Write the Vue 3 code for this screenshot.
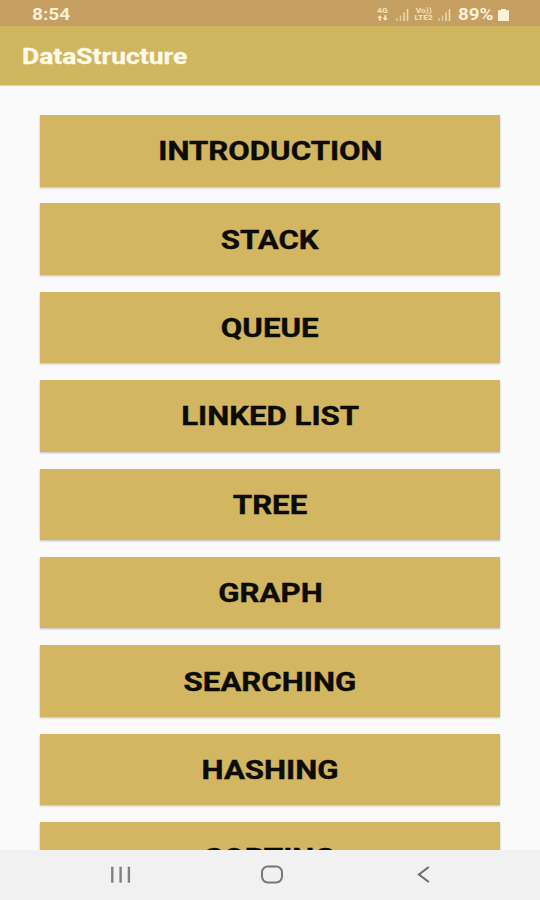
<script setup>
import { ref } from 'vue';

const appTitle = ref('DataStructure');

const topics = ref([
    'Introduction',
    'Stack',
    'Queue',
    'Linked List',
    'Tree',
    'Graph',
    'Searching',
    'Hashing',
    'Sorting',
]);
</script>

<template>
    <div class="screen">
        <div class="status-bar">
            <span class="clock">8:54</span>
            <div class="status-icons">
                <div class="network-type">
                    <span>4G</span>
                    <svg width="11" height="6" viewBox="0 0 10 5">
                        <path d="M2.5 0L4.8 2.5H3.3V5H1.7V2.5H0.2ZM7.5 5L5.2 2.5H6.7V0H8.3V2.5H9.8Z" fill="#f8ebcd" />
                    </svg>
                </div>
                <svg class="signal" width="13" height="13" viewBox="0 0 13 13">
                    <path d="M1 10V13M4.5 7.5V13" stroke="#f3e2bf" stroke-width="1.4" opacity="0.7" />
                    <path d="M8 4.5V13M11.5 1V13" stroke="#f3e2bf" stroke-width="1.6" opacity="0.85" />
                </svg>
                <div class="volte">
                    <span>Vo))</span>
                    <span>LTE2</span>
                </div>
                <svg class="signal" width="13" height="13" viewBox="0 0 13 13">
                    <path d="M1 10V13M4.5 7.5V13" stroke="#f3e2bf" stroke-width="1.4" opacity="0.7" />
                    <path d="M8 4.5V13M11.5 1V13" stroke="#f3e2bf" stroke-width="1.6" opacity="0.85" />
                </svg>
                <span class="battery-level">89%</span>
                <svg class="battery" width="11" height="12" viewBox="0 0 11 12">
                    <path d="M3 0H8V1.2H11V12H0V1.2H3Z" fill="#fbf0d8" />
                </svg>
            </div>
        </div>

        <header class="app-bar">
            <h1 class="app-title">{{ appTitle }}</h1>
        </header>

        <main class="topic-list">
            <button v-for="topic in topics" :key="topic" class="topic-button">
                <span class="topic-label">{{ topic }}</span>
            </button>
        </main>

        <nav class="nav-bar">
            <!-- Recents -->
            <svg width="152" height="50" viewBox="0 0 152 50">
                <path d="M68.3 16.8V32.8M76.6 16.8V32.8M84.9 16.8V32.8" fill="none" stroke="#808080" stroke-width="2.4" />
            </svg>
            <!-- Home -->
            <svg width="152" height="50" viewBox="0 0 152 50">
                <rect x="66" y="16.6" width="20" height="15.8" rx="5.8" fill="none" stroke="#777777" stroke-width="2" />
            </svg>
            <!-- Back -->
            <svg width="152" height="50" viewBox="0 0 152 50">
                <path d="M80.8 17L71 24.5L80.8 32" fill="none" stroke="#6c6c6c" stroke-width="2.1" />
            </svg>
        </nav>
    </div>
</template>

<style>
body {
    margin: 0;
    overflow: hidden;
}
</style>

<style scoped>
.screen {
    display: flex;
    flex-direction: column;
    width: 540px;
    height: 900px;
    overflow: hidden;
    background-color: #fafafa;
    font-family: Roboto, sans-serif;
}

/* Barra de estado */
.status-bar {
    display: flex;
    flex: none;
    align-items: center;
    justify-content: space-between;
    box-sizing: border-box;
    height: 26px;
    padding: 3px 31px 0 32px;
    background-color: #c59f61;
    color: #fbf0d8;
}

.clock {
    font-size: 16px;
    font-weight: 700;
    line-height: 22px;
    transform: scaleX(1.19);
    transform-origin: left;
}

.status-icons {
    display: flex;
    align-items: center;
}

.network-type,
.volte {
    display: flex;
    flex-direction: column;
    align-items: center;
    font-size: 7px;
    font-weight: 700;
    line-height: 7px;
    color: #f3e2bf;
}

.network-type {
    width: 12px;
    margin-right: 8px;
}

.network-type span {
    transform: scaleX(1.2);
}

.volte {
    width: 20px;
    margin: 0 4px 0 5px;
}

.volte span {
    line-height: 7px;
    transform: scaleX(1.2);
}

.battery-level {
    width: 36px;
    margin: 0 4px 0 7px;
    font-size: 16.5px;
    font-weight: 700;
    line-height: 20px;
    transform: scaleX(1.14);
    transform-origin: left;
}

/* Barra superior */
.app-bar {
    display: flex;
    flex: none;
    align-items: center;
    height: 59px;
    padding: 0 21.5px;
    background-color: #d1b660;
    box-shadow: 0 1px 1px rgba(120, 95, 30, 0.25);
}

.app-title {
    margin: 2px 0 0;
    color: #fffbea;
    font-size: 22px;
    font-weight: 700;
    line-height: 28px;
    -webkit-text-stroke: 0.3px #fffbea;
    transform: scaleX(1.2);
    transform-origin: left;
}

/* Lista de temas */
.topic-list {
    display: flex;
    flex: 1;
    flex-direction: column;
    gap: 16.9px;
    min-height: 0;
    padding: 30px 40px 0;
    overflow: hidden;
}

.topic-button {
    display: flex;
    flex: none;
    align-items: center;
    justify-content: center;
    height: 71.5px;
    padding: 1px 0 0;
    border: none;
    background-color: #d2b661;
    box-shadow: 0 1px 2px rgba(0, 0, 0, 0.25);
    color: #0c0b06;
    font-family: inherit;
}

.topic-label {
    font-size: 26px;
    font-weight: 700;
    line-height: 32px;
    text-transform: uppercase;
    -webkit-text-stroke: 0.4px #0c0b06;
    transform: scaleX(1.2);
}

/* Barra de navegación */
.nav-bar {
    display: flex;
    flex: none;
    justify-content: center;
    height: 50px;
    padding-left: 3px;
    background-color: #f1f1f1;
}
</style>
